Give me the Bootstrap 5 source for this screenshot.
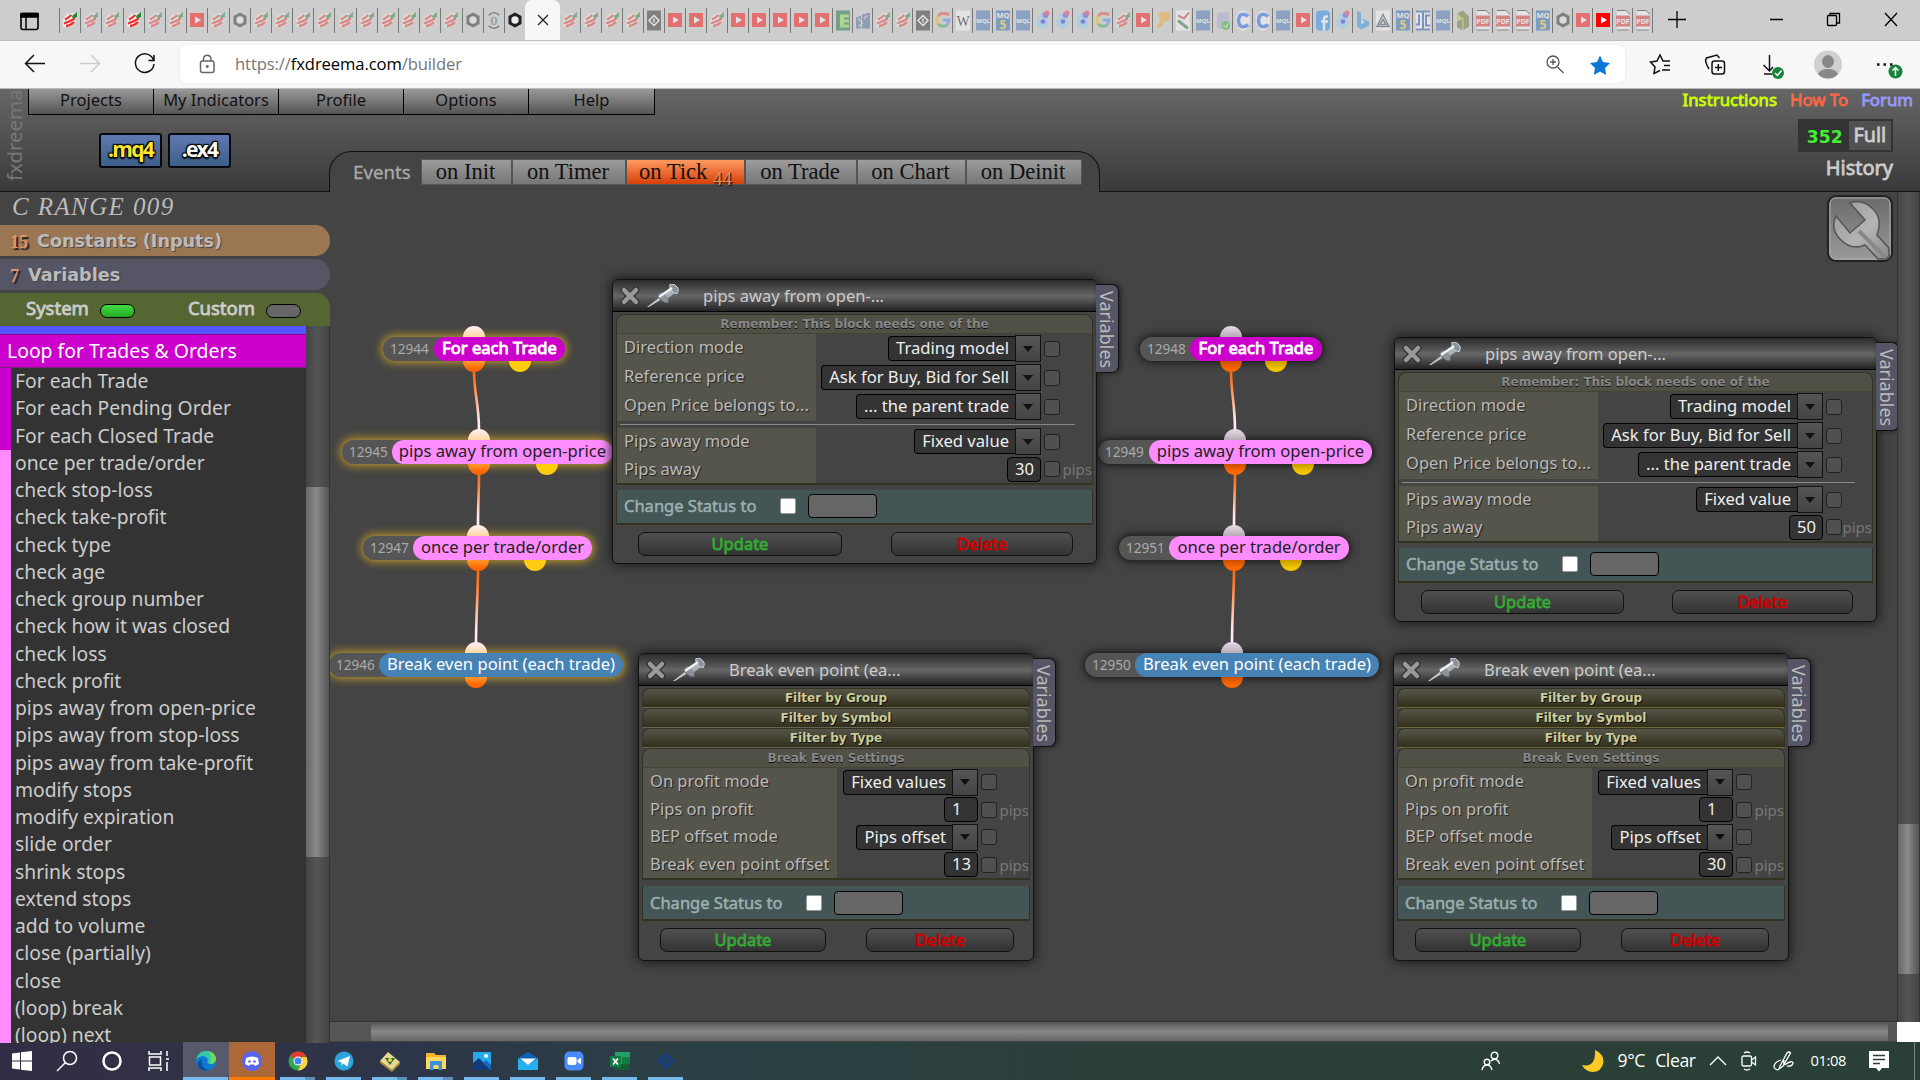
<!doctype html>
<html lang="en">

<head>
    <meta charset="utf-8" />
    <meta name="viewport" content="width=device-width, initial-scale=1" />
    <title>fxDreema Builder</title>
    <link href="https://cdn.jsdelivr.net/npm/bootstrap@5.3.0/dist/css/bootstrap.min.css" rel="stylesheet" />
    <style>
        body {
            width: 1920px;
            height: 1080px;
            overflow: hidden;
            background: #444;
            color: #ccc;
            font-family: "Noto Sans", sans-serif;
            font-size: 16.5px;
            line-height: 1.2;
        }

        .thick { -webkit-text-stroke: .8px currentColor; }

        /* browser */
        .tabstrip { height: 40px; background: #cdcdcd; }
        .tabstrip .tabs-menu { width: 59px; padding-left: 19px; }
        .fav { width: 21.2px; height: 25px; border-left: 1px solid #777; }
        .fav.b { width: 21px; border-left: 0; border-right: 1px solid #777; }
        .fav.c { width: 20px; border-left: 0; border-right: 1px solid #777; }
        .fav svg { width: 16px; height: 16px; opacity: .45; }
        .fav svg.tall { height: 21px; width: 14px; }
        .fav svg.on { opacity: 1; }
        .tab-open { width: 35px; height: 40px; background: #f7f7f7; border-radius: 7px 7px 0 0; }
        .toolbar { height: 49px; padding-bottom: 1px; background: #f7f7f7; border-top: 1px solid #bdbdbd; border-bottom: 1px solid #bbb; }
        .addr { width: 1445px; height: 38px; margin-left: 25px; background: #fff; border-radius: 6px; box-shadow: 0 0 2px #ddd; font-family: "Open Sans", sans-serif; font-size: 16.6px; letter-spacing: -.1px; color: #767676; padding: 0 15px 0 19px; }
        .addr b { font-weight: 400; color: #000; }

        /* header */
        .app-head { height: 103px; background: linear-gradient(#666, #3a3a3a); border-bottom: 1px solid #111; }
        .side-brand { width: 28px; color: #777; font-size: 20.4px; writing-mode: vertical-rl; transform: rotate(180deg); padding-right: 4px; padding-top: 10px; line-height: 20px; }
        .menu-btn { width: 125px; height: 26px; color: #111; background: linear-gradient(#999, #555); border: solid #000; border-width: 0 0 1px 1px; padding-top: 1px; }
        .menu-btn:last-child { width: 127px; border-right-width: 1px; }
        .file-btn { width: 63px; height: 35px; border: 2px solid #05080f; border-radius: 3px; background: linear-gradient(#6079b0, #3d5f88); font: bold 21px "Open Sans", sans-serif; letter-spacing: -1.7px; color: #fff; text-shadow: 0 0 2px #000, 1px 1px 1px #000, -1px -1px 1px #000, 1px -1px 1px #000, -1px 1px 1px #000, 0 2px 2px #000; padding-bottom: 3px; }
        .file-btn.mq { color: #ffe62e; }
        .events { width: 771px; height: 41px; margin-bottom: -1px; border: 1px solid #111; border-bottom: 0; border-radius: 22px 22px 0 0; background: #444; padding: 0 0 0 23px; }
        .events .ttl { width: 68px; font-size: 18.7px; color: #aaa; -webkit-text-stroke: .3px #aaa; }
        .ev { height: 26px; background: linear-gradient(#9c9c9c, #777); border: 1px solid #555; color: #111; font: 22.6px/23px "Liberation Serif", serif; text-align: center; padding-right: 2px; }
        .ev.active { background: linear-gradient(#ff9a62, #d63f08); padding-right: 0; }
        .ev small { font-size: 19px; color: #d9935f; text-shadow: 1px 1px 1px #000; position: relative; top: 6px; }
        .credit { height: 33px; border: 2px solid #333; background: #505050; }
        .credit .n { background: #333; color: #4e3; font: bold 17.2px "DejaVu Sans", sans-serif; height: 100%; padding: 6px 6px 0 7px; }

        /* sidebar */
        .side { width: 330px; }
        .pname { height: 33px; font: italic 25px/29px "Liberation Serif", serif; letter-spacing: 1.4px; padding-left: 12px; color: #bbb; }
        .bar { height: 31px; margin-bottom: 3px; border-radius: 0 15px 15px 0; padding-left: 10px; font: bold 17.6px "DejaVu Sans", sans-serif; color: #bbb; text-shadow: 1px 1px 1px #444; }
        .bar i { font: bold 18px "Liberation Serif", serif; color: #e09468; text-shadow: 2px 2px 1px #222; margin-right: 9px; position: relative; top: 2px; }
        .sys { height: 33px; background: #563; border-radius: 0 14px 0 0; font-size: 18.5px; padding-bottom: 3px; }
        .led { width: 35px; height: 14px; border: 1px solid #000; border-radius: 7px; background: #666; margin: 5px 0 0 11px; }
        .list-area { height: 717px; background: #333; overflow: hidden; }
        .cat { height: 34px; background: #c0c; border-top: 1px solid #808; border-bottom: 1px solid #727; color: #fff; font-size: 19.4px; line-height: 31px; padding-left: 7px; white-space: nowrap; }
        .li { height: 27.25px; border-left: 11px solid #ff8cff; padding-left: 4px; font-size: 19.3px; line-height: 25px; white-space: nowrap; }
        .li.m { border-color: #c0c; }
        .vbar { background: linear-gradient(90deg, #444, #555 45%, #444); border-right: 1px solid #333; }
        .vbar .th { background: linear-gradient(90deg, #666, #8a8a8a 45%, #666 80%, #555); }

        /* canvas */
        .stage { width: 1567px; height: 829px; overflow: hidden; position: relative; }
        .hbar { height: 20px; border-top: 1px solid #333; background: #555; }
        .hbar .th { width: 1517px; margin-left: 41px; background: linear-gradient(#555, #888 50%, #666); }
        .tool { position: absolute; left: 1497px; top: 3px; }
        .blk { position: absolute; height: 24px; }
        .blk .pill { position: relative; height: 24px; border-radius: 12px; background: #555; box-shadow: 0 0 9px 1px #111; }
        .blk.sel .pill { box-shadow: 0 0 8px 2px #b8932c; }
        .blk .no { font-size: 13.6px; color: #aaa; padding-left: 7px; }
        .blk .nm { height: 24px; border-radius: 12px; line-height: 22px; font-size: 16.6px; white-space: nowrap; text-align: center; }
        .dot { position: absolute; width: 22px; height: 11px; background: #f60; }
        .dot.t { top: -11px; border-radius: 11px 11px 0 0; background: linear-gradient(#eadcea, #b5aab5); }
        .sel .dot.t { background: linear-gradient(#ffeef8, #ffd9a0); }
        .dot.o { top: 24px; border-radius: 0 0 11px 11px; background: linear-gradient(#c85000, #f60 70%); }
        .dot.y { top: 24px; border-radius: 0 0 11px 11px; background: linear-gradient(#c79c00, #f3c400 70%); }
        .sel .dot.o { background: linear-gradient(#ff9a30, #f60 70%); }
        .sel .dot.y { background: #ffcc10; }

        /* block windows */
        .win { position: absolute; border: 1px solid #111; border-radius: 6px; background: #444; box-shadow: 0 0 12px 1px #181818; }
        .win-head { height: 32px; border-bottom: 1px solid #000; border-radius: 5px 5px 0 0; background: linear-gradient(#2b2b2b, #666 52%, #222); padding-left: 6px; }
        .vtab { position: absolute; left: 100%; top: 4px; width: 23px; height: 89px; background: #556; border: 1px solid #111; border-left: 0; border-radius: 0 7px 7px 0; writing-mode: vertical-rl; font-size: 18px; line-height: 20px; padding-top: 6px; padding-right: 1px; color: #bbb; box-shadow: 2px 0 5px #222; }
        .win-body { margin: 2px 3px 0; }
        .grp { height: 20px; border: 1px solid #332; border-bottom: 1px dotted #774; border-radius: 8px 8px 0 0; background: linear-gradient(#555548, #332f1c); color: #cc9; font: bold 12px/18px "DejaVu Sans", sans-serif; text-align: center; text-shadow: 1px 1px 0 #111; }
        .grp.off { background: #505046; color: #888; border-bottom: 1px solid #443; text-shadow: 0 1px 0 #111; }
        .rows { border: solid #332; border-width: 0 1px 2px; }
        .prm .lb { height: 100%; background: #55554b; padding: 3px 0 0 7px; text-shadow: 1px 1px 1px #222; color: #bbb; white-space: nowrap; }
        .rule { height: 7px; padding: 3px 17px 0 3px; }
        .rule div { height: 1px; background: #888; }
        .val { height: 25px; background: #333; border: 1px solid #000; border-radius: 4px; color: #eee; line-height: 22px; white-space: nowrap; font-size: 16.6px; }
        .val.s { padding: 0 6px 0 7px; border-radius: 4px 0 0 4px; border-right: 0; }
        .val.n { padding-left: 7px; width: 34px; }
        .arr { width: 26px; height: 27px; background: linear-gradient(#555, #444); border: 1px solid #111; }
        .cbx { width: 16px; height: 16px; border: 1px solid #222; border-radius: 3px; background: #505050; margin-left: 3px; }
        .unit { font-size: 15px; color: #777; text-align: right; white-space: nowrap; }
        .status { height: 35px; background: #455; border: solid #332; border-width: 0 1px 2px; padding-left: 7px; color: #9bb0ae; }
        .status .wb { width: 16px; height: 16px; border-radius: 2px; background: #fff; border: 1px solid #999; }
        .status .in { width: 69px; height: 24px; margin-left: 12px; border: 1px solid #000; border-radius: 4px; background: #666; }
        .wbtn { height: 24px; border: 1px solid #111; border-radius: 7px; background: linear-gradient(#505050, #333); line-height: 22px; text-align: center; }

        /* taskbar */
        .taskbar { height: 38px; background: linear-gradient(90deg, #322d44, #2d3648 22%, #2b4045 36%, #2a3f36 65%); color: #fff; font-family: "Open Sans", sans-serif; }
        .tk { width: 46px; height: 38px; position: relative; }
        .tk.run::after { content: ""; position: absolute; left: 5px; right: 6px; bottom: 0; height: 3px; background: #76b9ed; }
        .tk.multi::after { background: linear-gradient(90deg, #76b9ed 25px, #5d8fb8 25px); }
        .tk.cur { background: #585a6c; }
        .tk.cur::after { left: 0; right: 1px; }
        .tk.dis { background: #ae6837; }
        .tk.dis::after { left: 0; right: 0; background: #ff7800; }
    </style>
</head>

<body>
    <svg width="0" height="0" class="position-absolute">
        <defs>
            <linearGradient id="wire" x1="0" y1="0" x2="0" y2="1">
                <stop offset="0" stop-color="#ff6a08" />
                <stop offset=".2" stop-color="#ff7a2c" />
                <stop offset=".8" stop-color="#ffe6ea" />
                <stop offset="1" stop-color="#fff0fa" />
            </linearGradient>
            <linearGradient id="steel" x1="0" y1="0" x2="1" y2="1">
                <stop offset="0" stop-color="#999" />
                <stop offset=".55" stop-color="#b4b4b4" />
                <stop offset="1" stop-color="#888" />
            </linearGradient>
            <linearGradient id="plate" x1="0" y1="0" x2="0" y2="1">
                <stop offset="0" stop-color="#6a6a6a" />
                <stop offset="1" stop-color="#9b9b9b" />
            </linearGradient>
            <symbol id="fx" viewBox="0 0 16 16">
                <path d="M1 8Q2 3 9 1L15 1Q15 12 8 15L1 15Z" fill="#fff" opacity=".6" />
                <path d="M3 7.500Q6 6 9.500 3M2 11.500Q8 9.500 13 6.500M4 14Q8 14 12 10" stroke="#f03030" stroke-width="2.300" fill="none" />
                <path d="M10 4L15 0V5L11 7Z" fill="#1d8a35" />
            </symbol>
            <symbol id="yt" viewBox="0 0 16 16"><path d="M1 1H15V15H1Z" fill="#f00" /><path d="M6 4.500L12 8L6 11.500Z" fill="#fff" /></symbol>
            <symbol id="hex" viewBox="0 0 16 16"><path d="M8 .5L14.500 4V12L8 15.500L1.500 12V4Z" fill="#222" /><circle cx="8" cy="8" r="3.700" fill="#eee" /></symbol>
            <symbol id="br" viewBox="0 0 16 20"><path d="M2 4Q8-2 14 4M2 16Q8 22 14 16" stroke="#111" stroke-width="1.500" fill="none" /><text x="8" y="13.500" font-size="11" text-anchor="middle" fill="#111">{}</text></symbol>
            <symbol id="cp" viewBox="0 0 14 20"><path d="M0 0H14V20H0Z" fill="#222" /><path d="M7 5L12 10L7 15L2 10ZM7 8V12" stroke="#fff" stroke-width="1.500" fill="none" /></symbol>
            <symbol id="ee" viewBox="0 0 14 20"><path d="M0 0H14V20H0Z" fill="#086a38" /><path d="M4 4H13V7H8V9H13V12H8V14H13V17H4Z" fill="#8fdc4a" /></symbol>
            <symbol id="chk" viewBox="0 0 14 16"><path d="M0 5L5 3V16H0ZM6 2L14 0V16H6Z" fill="#4a6596" /><path d="M2 6L5 9M8 6L11 3M3 14L7 10" stroke="#ccc" stroke-width="1.500" /></symbol>
            <symbol id="gg" viewBox="0 0 16 16"><path d="M14 3Q8-1 3 4" stroke="#ea4335" stroke-width="3" fill="none" /><path d="M3 4Q1 8 3 12" stroke="#fbbc05" stroke-width="3" fill="none" /><path d="M3 12Q7 16 12 13" stroke="#34a853" stroke-width="3" fill="none" /><path d="M8 8H14Q14 11 12 13" stroke="#4285f4" stroke-width="3" fill="none" /></symbol>
            <symbol id="ww" viewBox="0 0 14 20"><path d="M0 0H14V20H0Z" fill="#fff" /><text x="7" y="15" font-size="14" text-anchor="middle" font-family="Liberation Serif" fill="#000">W</text></symbol>
            <symbol id="mql" viewBox="0 0 14 20"><path d="M0 0H14V20H0Z" fill="#3c6fb8" /><text x="7" y="12" font-size="6" font-weight="bold" text-anchor="middle" fill="#fff">MQL</text></symbol>
            <symbol id="mq5" viewBox="0 0 14 20"><path d="M0 0H14V20H0Z" fill="#1f62b4" /><text x="7" y="7.500" font-size="7.500" font-weight="bold" text-anchor="middle" fill="#fff">MQ</text><text x="7" y="18.500" font-size="12" font-weight="bold" text-anchor="middle" fill="#ffc928">5</text></symbol>
            <symbol id="blob" viewBox="0 0 14 20"><path d="M3 4Q8 1 12 8Q14 18 7 19Q0 18 0 12Z" fill="#90d0f0" /><circle cx="7" cy="11" r="2.300" fill="#22e" /><circle cx="9.500" cy="4.500" r="3" fill="#54e" /><circle cx="11" cy="2.500" r="2.500" fill="#f02a50" /></symbol>
            <symbol id="orn" viewBox="0 0 16 16"><path d="M3 0H15V8L9 10L7 15L1 16L5 8Z" fill="#f5a623" /></symbol>
            <symbol id="cnd" viewBox="0 0 14 20"><path d="M0 0H14V20H0Z" fill="#fff" /><path d="M2 5L8 8L13 2" stroke="#c33" stroke-width="2" fill="none" /><path d="M2 10L12 18" stroke="#274" stroke-width="3" /></symbol>
            <symbol id="db" viewBox="0 0 14 20"><path d="M1 3Q7 0 13 3V17Q7 20 1 17Z" fill="#a7a7d2" /><circle cx="10" cy="15" r="4.500" fill="#3a3" /><path d="M8 15L10 17L12 13" stroke="#fff" fill="none" /></symbol>
            <symbol id="cc" viewBox="0 0 14 20"><ellipse cx="7" cy="10" rx="7" ry="10" fill="#fff" /><path d="M12 6Q8 2 4 5Q1 10 4 15Q8 18 12 14" stroke="#1a5ff0" stroke-width="3.500" fill="none" /></symbol>
            <symbol id="fb" viewBox="0 0 14 20"><rect width="14" height="20" rx="4" fill="#1285f5" /><path d="M12 6H10Q8 6 8 9V20M5 11H12" stroke="#fff" stroke-width="2.500" fill="none" /></symbol>
            <symbol id="bb" viewBox="0 0 14 20"><path d="M1 0L5 2V14L9 12L6 8L13 11V15L5 19L1 16Z" fill="#1e90e8" /></symbol>
            <symbol id="aa" viewBox="0 0 14 20"><path d="M0 0H14V20H0Z" fill="#fff" /><path d="M7 4L13 16H1ZM7 9L10 14H4Z" stroke="#345" fill="none" stroke-width="1.500" /></symbol>
            <symbol id="jc" viewBox="0 0 14 20"><path d="M0 0H14V20H0Z" fill="#fff" /><path d="M0 1H14M0 19H14M3 4V14H0M7 2V18M14 5H10V15H14" stroke="#1b4fae" stroke-width="2" fill="none" /></symbol>
            <symbol id="box" viewBox="0 0 14 20"><path d="M1 3L7 0L13 6V16L7 20L1 17Z" fill="#677028" /><path d="M1 3L7 8L1 11Z" fill="#b5d424" /><path d="M7 8V20" stroke="#c9dc70" /></symbol>
            <symbol id="pdf" viewBox="0 0 14 20"><path d="M1 0H10L14 4V20H1Z" fill="#fff" /><path d="M1 0H10L14 4M1 19.500H13" stroke="#222" fill="none" /><path d="M0 5H14V16H0Z" fill="#e23030" /><text x="7" y="13.500" font-size="7" font-weight="bold" text-anchor="middle" fill="#fff">PDF</text></symbol>
            <symbol id="pin" viewBox="0 0 32 24">
                <path d="M0 23L13 13L15 15L2 23Z" fill="#c8c8c8" />
                <path d="M11 10Q15 7 19 10Q23 14 21 19Q17 19 14 16Q11 14 11 10Z" fill="#8b9298" stroke="#667" />
                <path d="M17 9L24 4L28 9L21 14Z" fill="#aab2b6" />
                <path d="M23 0Q28-1 31 4Q32 7 30 10Q26 9 24 6Q22 3 23 0Z" fill="#8d9499" stroke="#dde" stroke-width=".8" />
                <path d="M12 13L25 4" stroke="#f2f5f5" stroke-width="2.200" />
            </symbol>
        </defs>
    </svg>

    <div class="tabstrip d-flex align-items-center" id="tabstrip">
        <div class="tabs-menu">
            <svg width="21" height="19" viewBox="0 0 21 19"><rect x="2" y="1.500" width="17" height="16" rx="2" fill="none" stroke="#000" stroke-width="1.600" /><path d="M2 1.500H19V5H2ZM7 5V17" stroke="#000" stroke-width="1.500" /></svg>
        </div>
        <div class="d-flex" id="tabsA"></div>
        <div class="tab-open d-flex align-items-center justify-content-center">
            <svg width="12" height="12" viewBox="0 0 12 12" stroke="#222" stroke-width="1.300"><path d="M1 1L11 11M11 1L1 11" /></svg>
        </div>
        <div class="d-flex" id="tabsB"></div>
        <svg class="ms-auto" width="266" height="40" viewBox="1654 0 266 40" fill="none" stroke="#000" stroke-width="1.300"><path d="M1668 19.500H1686M1677 11V28M1770 19.500H1783M1885 13L1897 26M1897 13L1885 26" /><rect x="1827.500" y="15.500" width="9" height="10" rx="1" /><path d="M1830 15V13.500H1839.500V23H1837" /></svg>
    </div>

    <div class="toolbar d-flex align-items-center">
        <svg width="155" height="46" viewBox="0 40 155 46" fill="none" stroke="#111" stroke-width="1.500"><path d="M45 62.500H26M34 54L25.500 62.500L34 71" /><path d="M80 62.500H99M91 54L99.500 62.500L91 71" stroke="#ccc" /><path d="M153.500 59A9.300 9.300 0 1 0 154 63M154 54V59.500H148.500" /></svg>
        <div class="addr d-flex align-items-center">
            <svg class="me-3" width="17" height="20" viewBox="0 0 17 20" fill="none" stroke="#666" stroke-width="1.500"><rect x="1.500" y="7" width="13.500" height="11.500" rx="2" /><path d="M4.500 7V4.500Q5 1.200 8.300 1.200Q11.500 1.200 12 4.500V7" /><circle cx="8.300" cy="12.500" r=".7" /></svg>
            <span style="margin-left: 3px">https://<b>fxdreema.com</b>/builder</span>
            <svg class="ms-auto" width="64" height="24" viewBox="1546 50 64 24" fill="none"><circle cx="1553" cy="60" r="6" stroke="#555" stroke-width="1.300" /><path d="M1557.500 65L1563.500 71M1550 60H1556M1553 57V63" stroke="#555" stroke-width="1.300" /><path d="M1600 53.500L1603 60L1610 61L1605 66L1606.200 73L1600 69.500L1593.800 73L1595 66L1590 61L1597 60Z" fill="#0a78d7" /></svg>
        </div>
        <svg class="ms-auto" width="295" height="46" viewBox="1625 40 295 46" fill="none" stroke="#111" stroke-width="1.500">
            <path d="M1670 60H1663L1660 54L1657 60L1650.500 61L1655 66L1654 72.500L1660 69.500M1664 64.500H1670M1662 69H1670" />
            <rect x="1712" y="60" width="12.500" height="13" rx="2.500" /><path d="M1718.300 63V70M1715 66.500H1722M1709 68Q1704 60 1706.500 57L1717 54L1719.500 57" />
            <path d="M1769.500 54V69M1763.500 64L1769.500 70L1773 66M1764 73H1772" /><circle cx="1778" cy="72" r="6" fill="#16833a" stroke="none" /><path d="M1775 72L1777.500 74.500L1781.500 69.500" stroke="#fff" />
            <circle cx="1828" cy="63.500" r="14" fill="#d2d0ce" stroke="none" /><ellipse cx="1828" cy="60.500" rx="6" ry="6.500" fill="#8a8886" stroke="none" /><path d="M1818 73Q1820 68 1828 68Q1836 68 1838 73Q1834 77.500 1828 77.500Q1822 77.500 1818 73Z" fill="#8a8886" stroke="none" />
            <path d="M1877 63.500H1879.500M1883.500 63.500H1886M1890 63.500H1892.500" stroke-width="2.500" /><circle cx="1895.500" cy="70.500" r="7" fill="#16833a" stroke="none" /><path d="M1895.500 75V67M1892.500 69.500L1895.500 66.500L1898.500 69.500" stroke="#fff" />
        </svg>
    </div>

    <div class="app-head d-flex">
        <div class="side-brand">fxdreema</div>
        <div class="d-flex flex-column" style="width: 301px">
            <div class="d-flex" id="menu"></div>
            <div class="d-flex" style="margin: 18px 0 0 71px; gap: 6px">
                <div class="file-btn mq d-flex align-items-center justify-content-center flex-shrink-0">.mq4</div>
                <div class="file-btn d-flex align-items-center justify-content-center flex-shrink-0">.ex4</div>
            </div>
        </div>
        <div class="align-self-end events d-flex align-items-center">
            <span class="ttl">Events</span>
            <div class="ev" style="width: 91px">on Init</div>
            <div class="ev" style="width: 114px">on Timer</div>
            <div class="ev active" style="width: 119px">on Tick <small>44</small></div>
            <div class="ev" style="width: 112px">on Trade</div>
            <div class="ev" style="width: 109px">on Chart</div>
            <div class="ev" style="width: 116px">on Deinit</div>
        </div>
        <div class="ms-auto d-flex flex-column align-items-end thick">
            <div class="d-flex" style="gap: 13px; padding: 1px 7px 0 0; height: 30px; font-size: 16.8px">
                <span style="color: #cf0">Instructions</span><span style="color: #f64">How To</span><span style="color: #99f">Forum</span>
            </div>
            <div class="credit d-flex" style="margin-right: 27px"><span class="n" style="-webkit-text-stroke: 0">352</span><span style="font-size: 19.6px; padding: 2px 5px 0">Full</span></div>
            <div style="font-size: 20px; margin: 4px 27px 0 0">History</div>
        </div>
    </div>

    <div class="d-flex" style="height: 850px">
        <div class="side">
            <div class="pname">C RANGE 009</div>
            <div class="bar d-flex align-items-center" style="background: #9b7653"><i>15</i>Constants (Inputs)</div>
            <div class="bar d-flex align-items-center" style="background: #556"><i>7</i>Variables</div>
            <div class="sys thick d-flex align-items-center">
                <span style="margin-left: 26px">System</span><span class="led" style="background: linear-gradient(#4d4, #2a2)"></span>
                <span style="margin-left: 53px">Custom</span><span class="led"></span>
            </div>
            <div class="list-area d-flex">
                <div style="width: 306px" id="list">
                    <div style="height: 8px; background: #55f"></div>
                    <div class="cat">Loop for Trades &amp; Orders</div>
                </div>
                <div class="vbar" style="width: 24px">
                    <div class="th" style="height: 370px; margin-top: 161px"></div>
                </div>
            </div>
        </div>

        <div style="width: 1567px">
            <div class="stage" id="stage">
                <svg id="wires" width="1567" height="829" class="position-absolute top-0 start-0" fill="none" stroke-width="2.600"></svg>
                <svg class="tool" width="67" height="68" viewBox="0 0 67 68">
                    <rect x="1" y="1" width="64" height="65" rx="8" fill="url(#plate)" stroke="#222" stroke-width="2" />
                    <rect x="3" y="3" width="60" height="61" rx="6" fill="none" stroke="#aaa" />
                    <path d="M23 8Q36 4 46 14Q56 24 50 40L62 53V61L59 64H51L38 50Q24 56 13 44Q3 34 9 21L23 38L38 25Z" fill="url(#steel)" stroke="#555" stroke-width="1.500" />
                    <path d="M32 36L58 62" stroke="#888" stroke-width="4" />
                </svg>
            </div>
            <div class="hbar d-flex"><div class="th"></div></div>
        </div>
        <div style="width: 23px" class="d-flex flex-column">
            <div class="vbar" style="height: 830px; border-left: 1px solid #333">
                <div class="th" style="height: 150px; margin-top: 632px"></div>
            </div>
            <div class="flex-grow-1 bg-white"></div>
        </div>
    </div>

    <div class="taskbar d-flex align-items-center">
        <div class="d-flex" id="tasks"></div>
        <div class="ms-auto d-flex align-items-center">
            <svg width="20" height="20" viewBox="0 0 20 20" fill="none" stroke="#fff" stroke-width="1.400"><circle cx="13.500" cy="4.500" r="3.300" /><circle cx="6" cy="11" r="2.800" /><path d="M1 19Q2 14 6 14Q10 14 11 19M10 10Q13 7 16 9Q18 10 18.500 13" /></svg>
            <svg style="margin-left: 80px" width="24" height="24" viewBox="0 0 24 24"><path d="M14 1Q23 5 22.500 13Q21 23 11 23Q4 22 1 16Q15 19 14 1Z" fill="#ffc928" /></svg>
            <span style="margin-left: 13px; font-size: 17.6px; word-spacing: 6px; letter-spacing: -.4px">9°C Clear</span>
            <svg style="margin-left: 13px" width="18" height="12" viewBox="0 0 18 12" fill="none" stroke="#fff" stroke-width="1.400"><path d="M1 10L9 2L17 10" /></svg>
            <svg style="margin-left: 14px" width="16" height="20" viewBox="0 0 16 20" fill="none" stroke="#fff" stroke-width="1.300"><rect x="1" y="5" width="9.500" height="10" rx="1.500" /><path d="M10.500 9L14.500 6V14L10.500 11M3 2Q6 0 9 2M3 18Q6 20 9 18" /></svg>
            <svg style="margin-left: 16px" width="21" height="21" viewBox="0 0 21 21" fill="none" stroke="#fff" stroke-width="1.300"><path d="M7 15L14 2Q16 0 17.500 2L10 15L6 18ZM8 9Q1 11 1 16Q3 20 6 18M11 9Q10 15 13 13Q19 9 20 12Q19 16 14 15" /></svg>
            <span style="margin: 0 23px 0 17px; font-size: 14.7px; letter-spacing: -.4px">01:08</span>
            <svg style="margin-right: 25px" width="20" height="21" viewBox="0 0 20 21"><path d="M0 0H20V17H13L10 20.500L7 17H0Z" fill="#fff" /><path d="M4 4.500H16M4 8.500H16M4 12.500H11" stroke="#2a3f36" stroke-width="1.300" /></svg>
            <div style="width: 1px; height: 38px; background: #78857d; margin-right: 5px"></div>
        </div>
    </div>

    <script src="https://cdn.jsdelivr.net/npm/bootstrap@5.3.0/dist/js/bootstrap.bundle.min.js"></script>
    <script>
        const byId = id => document.getElementById(id);

        // names ending in ! are shown at full strength
        function addTabs(target, names, cls) {
            const tall = ['br', 'cp', 'ee', 'chk', 'mql', 'mq5', 'blob', 'cnd', 'db', 'cc', 'fb', 'bb', 'aa', 'jc', 'box', 'pdf', 'ww'];
            names.split(' ').forEach(n => {
                const id = n.replace('!', '');
                const c = (tall.includes(id) ? 'tall ' : '') + (n.endsWith('!') ? 'on' : '');
                byId(target).insertAdjacentHTML('beforeend', `<div class="fav ${cls} d-flex align-items-center justify-content-center"><svg class="${c}"><use href="#${id}"/></svg></div>`);
            });
        }
        addTabs('tabsA', 'fx! fx fx fx! fx fx yt fx hex fx fx fx fx fx fx fx fx fx fx hex br hex!', 'a');
        addTabs('tabsB', 'fx fx fx fx cp yt yt fx yt yt yt yt yt', 'b');
        addTabs('tabsB', 'ee chk fx fx cp gg ww mql mq5 mql blob blob blob gg fx yt orn cnd mql db cc cc mql yt fb blob bb aa mq5 jc mql box pdf pdf pdf mq5 hex yt yt! pdf pdf', 'c');

        ['Projects', 'My Indicators', 'Profile', 'Options', 'Help'].forEach(t => {
            byId('menu').insertAdjacentHTML('beforeend', `<div class="menu-btn text-center flex-shrink-0">${t}</div>`);
        });

        ['For each Trade', 'For each Pending Order', 'For each Closed Trade', 'once per trade/order', 'check stop-loss', 'check take-profit',
            'check type', 'check age', 'check group number', 'check how it was closed', 'check loss', 'check profit', 'pips away from open-price',
            'pips away from stop-loss', 'pips away from take-profit', 'modify stops', 'modify expiration', 'slide order', 'shrink stops',
            'extend stops', 'add to volume', 'close (partially)', 'close', '(loop) break', '(loop) next'
        ].forEach((t, i) => {
            byId('list').insertAdjacentHTML('beforeend', `<div class="li ${i < 3 ? 'm' : ''}">${t}</div>`);
        });

        // page coordinates; the stage starts at 330,192
        const SX = 330, SY = 192;
        const pink = 'background:#ff8cff;color:#222', blue = 'background:#4682b4;color:#fff';
        const magenta = 'background:#c0c;color:#fff;-webkit-text-stroke:.9px #fff';
        // id, name, x, name x, right, y, connector x, second output x, style
        const blocks = [
            [12944, 'For each Trade', 383, 434, 565, 337, 474, 520, magenta],
            [12945, 'pips away from open-price', 342, 392, 613, 440, 479, 547, pink],
            [12947, 'once per trade/order', 363, 413, 592, 536, 478, 535, pink],
            [12946, 'Break even point (each trade)', 329, 379, 623, 653, 476, 0, blue],
            [12948, 'For each Trade', 1140, 1190, 1322, 337, 1231, 1276, magenta],
            [12949, 'pips away from open-price', 1098, 1149, 1372, 440, 1235, 1303, pink],
            [12951, 'once per trade/order', 1119, 1169, 1349, 536, 1234, 1291, pink],
            [12950, 'Break even point (each trade)', 1085, 1135, 1379, 653, 1232, 0, blue]
        ];
        blocks.forEach((b, i) => {
            const [no, name, x, nx, r, y, cx, yx, st] = b;
            byId('stage').insertAdjacentHTML('beforeend', `
            <div class="blk ${i < 4 ? 'sel' : ''}" style="left:${x - SX}px;top:${y - SY}px;width:${r - x}px">
                <div class="pill d-flex align-items-center">
                    <span class="no" style="width:${nx - x}px">${no}</span>
                    <span class="nm" style="width:${r - nx}px;${st}">${name}</span>
                </div>
                <div class="dot t" style="left:${cx - x - 11}px"></div>
                <div class="dot o" style="left:${cx - x - 11}px"></div>
                ${yx ? `<div class="dot y" style="left:${yx - x - 11}px"></div>` : ''}
            </div>`);
            if (i % 4 < 3) {
                const x1 = cx - SX, y1 = y + 34 - SY, x2 = blocks[i + 1][6] - SX, y2 = blocks[i + 1][5] - 10 - SY;
                byId('wires').insertAdjacentHTML('beforeend', `<path stroke="url(#wire)" d="M${x1} ${y1}C${x1} ${y1 + 22} ${x2} ${y2 - 26} ${x2} ${y2}"/>`);
            }
        });

        function param(p, o, h) {
            if (!p) return '<div class="rule"><div></div></div>';
            const sel = isNaN(p[1]);
            const v = sel
                ? `<span class="val s">${p[1]}</span><span class="arr d-flex align-items-center justify-content-center"><svg width="10" height="6"><path d="M0 0H10L5 6Z" fill="#111"/></svg></span>`
                : `<span class="val n">${p[1]}</span>`;
            return `<div class="prm d-flex" style="height:${h}px"><div class="lb" style="width:${o.lw}px">${p[0]}</div>
                <div class="flex-grow-1 d-flex align-items-center justify-content-end">${v}<span class="cbx"></span><span class="unit" style="width:${o.uw}px">${sel ? '' : 'pips'}</span></div></div>`;
        }

        function addWindow(o) {
            let hs = o.heights.slice();
            byId('stage').insertAdjacentHTML('beforeend', `
            <div class="win" style="left:${o.x - SX}px;top:${o.y - SY}px;width:${o.w}px;height:${o.h}px">
                <div class="vtab">Variables</div>
                <div class="win-head d-flex align-items-center">
                    <svg width="22" height="22" viewBox="0 0 22 22"><path d="M5 5L17 17M17 5L5 17" stroke="#333" stroke-width="7" stroke-linecap="round"/><path d="M5 5L17 17M17 5L5 17" stroke="#999" stroke-width="4.500" stroke-linecap="round"/></svg>
                    <svg style="margin-left:6px" width="32" height="24"><use href="#pin"/></svg>
                    <span style="margin-left:24px">${o.title}</span>
                </div>
                <div class="win-body">
                    ${o.filters.map(f => `<div class="grp">${f}</div>`).join('')}
                    <div class="grp off">${o.group}</div>
                    <div class="rows">${o.params.map(p => param(p, o, p ? hs.shift() : 0)).join('')}</div>
                    <div class="status d-flex align-items-center" style="margin-top:${o.sm}px"><span class="thick" style="width:${o.sw}px;-webkit-text-stroke-width:.5px">Change Status to</span><span class="wb"></span><span class="in"></span></div>
                </div>
                <div class="d-flex thick" style="margin:7px 0 0 ${o.btn[0]}px;gap:${o.btn[2]}px">
                    <div class="wbtn" style="width:${o.btn[1]}px;color:#3a3">Update</div>
                    <div class="wbtn" style="width:${o.btn[3]}px;color:#c00">Delete</div>
                </div>
            </div>`);
        }

        [[612, 279, 30, 485, 32, [25, 204, 49, 182]], [1394, 337, 50, 483, 30, [26, 203, 48, 181]]].forEach(([x, y, n, w, uw, btn]) => addWindow({
            x, y, w, uw, btn, h: 285, lw: 199, sw: 156, sm: 5, title: 'pips away from open-...', filters: [], group: 'Remember: This block needs one of the',
            heights: [29, 29, 29, 27.5, 27],
            params: [['Direction mode', 'Trading model'], ['Reference price', 'Ask for Buy, Bid for Sell'], ['Open Price belongs to...', '... the parent trade'], null,
                ['Pips away mode', 'Fixed value'], ['Pips away', n]]
        }));
        [[638, 653, 13], [1393, 653, 30]].forEach(([x, y, n]) => addWindow({
            x, y, w: 396, uw: 32, h: 308, lw: 194, sw: 156, sm: 6, title: 'Break even point (ea...', filters: ['Filter by Group', 'Filter by Symbol', 'Filter by Type'], group: 'Break Even Settings',
            heights: [28, 27, 28, 27], btn: [21, 166, 40, 148],
            params: [['On profit mode', 'Fixed values'], ['Pips on profit', 1], ['BEP offset mode', 'Pips offset'], ['Break even point offset', n]]
        }));

        const icons = [
            ['', '<path d="M2 4.500L10 3.500V11.500H2ZM11 3.300L22 2V11.500H11ZM2 12.500H10V20.500L2 19.500ZM11 12.500H22V22L11 20.700Z" fill="#fff"/>'],
            ['', '<g fill="none" stroke="#fff" stroke-width="1.500"><circle cx="15" cy="9" r="6.500"/><path d="M10.500 13.500L2 22"/></g>'],
            ['', '<circle cx="12" cy="12" r="8.500" fill="none" stroke="#fff" stroke-width="2.500"/>'],
            ['', '<g fill="none" stroke="#fff" stroke-width="1.500"><path d="M2 2V5H14V2M2 22V19H14V22M20 2V7M20 13V22M19 10H22"/><rect x="2.500" y="8" width="11" height="8"/></g>'],
            ['run cur', '<circle cx="12" cy="12" r="10" fill="#0c7bd0"/><path d="M2 11Q4 2 12 2Q21 2 22 10Q22 15 16 15Q12 14 14 11Q13 7 8 7Q4 8 2 11Z" fill="#35c6a8"/><path d="M14 2.300Q22 4 22 10Q21 15 16 15Q19 8 14 2.300Z" fill="#6fdc5c"/><path d="M8 10Q6 19 15 21Q7 23 4 17Q3 12 8 10Z" fill="#0a4f9c"/>'],
            ['run dis', '<circle cx="12" cy="12" r="10" fill="#5865f2"/><path d="M6 9Q12 6 18 9L19 15L15 17L14 15.500H10L9 17L5 15Z" fill="#fff"/><circle cx="9.500" cy="12.500" r="1.300" fill="#5865f2"/><circle cx="14.500" cy="12.500" r="1.300" fill="#5865f2"/>'],
            ['run multi', '<circle cx="12" cy="12" r="9.500" fill="#2da94f"/><path d="M12 12L4 7Q7 2.500 12 2.500Q18 2.500 20.500 8H12Z" fill="#e33b2e"/><path d="M20.500 8Q23 14 19 18.500Q16 21.500 12 21.500L16 13V8Z" fill="#fdd23e"/><circle cx="12" cy="12" r="4.500" fill="#fff"/><circle cx="12" cy="12" r="3.500" fill="#4285f4"/>'],
            ['run', '<circle cx="12" cy="12" r="9.500" fill="#2da5de"/><path d="M5.500 12L18 7L15.500 17.500L11 14.500L9.500 17V13.500Z" fill="#fff"/>'],
            ['run multi', '<path d="M10 3L22 13L14 21L2 12Z" fill="#e8d793"/><path d="M2 12L14 21L22 13V15L14 23L2 14Z" fill="#a98f34"/><path d="M7 9H17L12 16Z" fill="#1f6a3a"/><circle cx="12" cy="11" r="2" fill="#ffd02e"/>'],
            ['run multi', '<path d="M2 4H10L12 6H22V20H2Z" fill="#f9b52c"/><path d="M2 8H22V20H2Z" fill="#ffd75e"/><path d="M6 21V12H18V21H14.500V16H9.500V21Z" fill="#3a93da"/>'],
            ['run', '<path d="M3 3H21V21H3Z" fill="#27a8ea"/><path d="M3 14L9 9L21 21H3Z" fill="#123a78"/><path d="M13 14L16 11L21 16V21Z" fill="#1b66b8"/><circle cx="16" cy="7" r="2" fill="#fff"/>'],
            ['run', '<path d="M2 9L12 3L22 9V21H2Z" fill="#0b62b4"/><path d="M2 9L12 16L22 9V21H2Z" fill="#25b2f2"/><path d="M4 9.500H20L12 16Z" fill="#fff"/>'],
            ['run', '<rect x="2.500" y="2.500" width="19" height="19" rx="5" fill="#4a8cff"/><rect x="5.500" y="8" width="9" height="8" rx="2" fill="#fff"/><path d="M15.500 11L19 8.500V15.500L15.500 13Z" fill="#fff"/>'],
            ['run', '<path d="M7 3H22V21H7Z" fill="#21a366"/><path d="M14 8H22V15H14Z" fill="#107c41"/><path d="M7 15H22V21H7Z" fill="#185c37"/><path d="M2 7H13V18H2Z" fill="#107c41"/><path d="M5 9.500L10 15.500M10 9.500L5 15.500" stroke="#fff" stroke-width="1.700"/>'],
            ['run', '<path d="M12 3L21 12L12 21L3 12Z" fill="#173f7c"/><path d="M10 8L14 12L10 16" stroke="#2b4045" stroke-width="2" fill="none"/>']
        ];
        // the first four icons sit slightly closer together
        const widths = [44, 45, 45, 49];
        icons.forEach(([c, svg], i) => {
            byId('tasks').insertAdjacentHTML('beforeend', `<div class="tk ${c} d-flex align-items-center justify-content-center" style="width:${widths[i] || 46}px"><svg width="24" height="24" viewBox="0 0 24 24">${svg}</svg></div>`);
        });
    </script>
</body>

</html>
